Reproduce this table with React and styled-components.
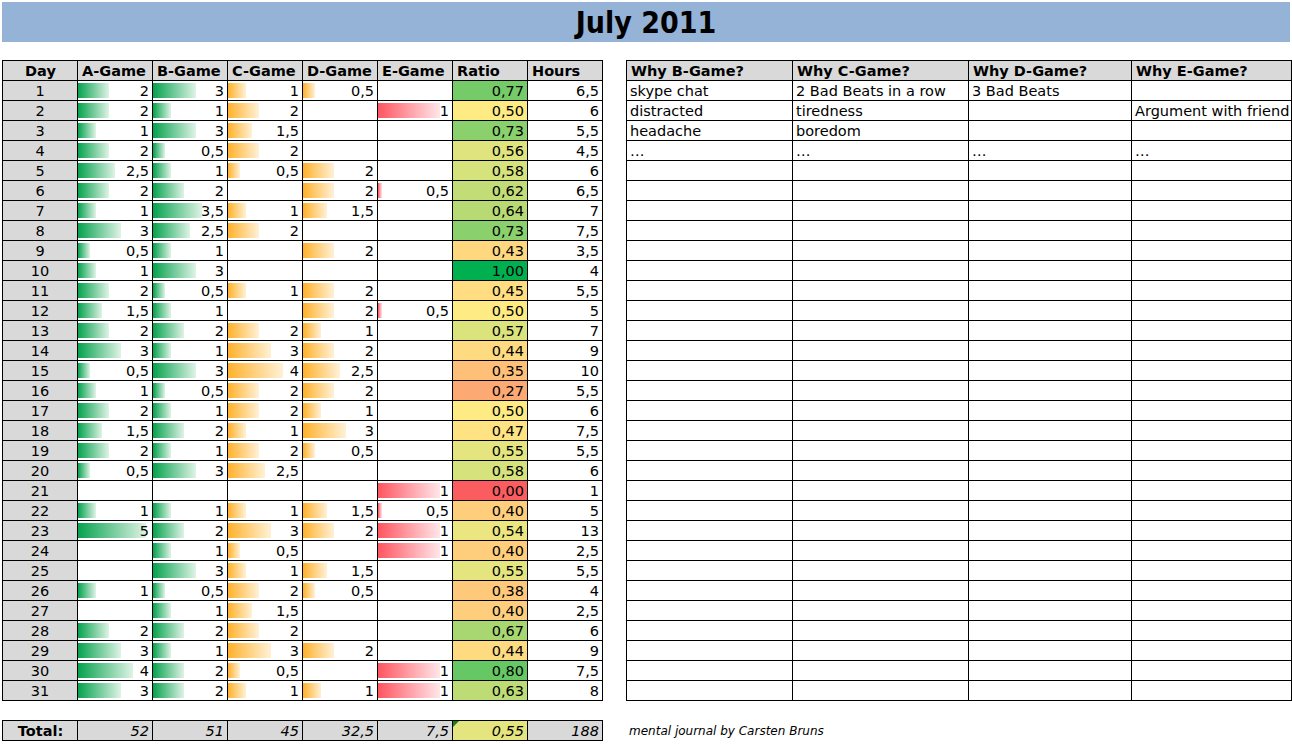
import { Fragment } from "react";
import styled, { createGlobalStyle } from "styled-components";

const GlobalStyle = createGlobalStyle`
    body {
        margin: 0;
        background: #fff;
        font-family: "DejaVu Sans", Verdana, sans-serif;
        color: #000;
    }
`;

const Page = styled.div`
    padding: 2px;
    width: 1288px;
`;

const TitleBar = styled.div`
    height: 40px;
    background: #95b3d7;
    display: flex;
    align-items: center;
    justify-content: center;
    font-family: "DejaVu Sans Condensed", "Liberation Sans Narrow", "DejaVu Sans", sans-serif;
    font-stretch: condensed;
    font-weight: bold;
    font-size: 30px;
    padding-top: 1px;
    box-sizing: border-box;
`;

const Sheets = styled.div`
    display: flex;
    align-items: flex-start;
    gap: 23px;
    margin-top: 18px;
`;

const Grid = styled.div`
    display: grid;
    grid-template-columns: ${(p) => p.$cols};
    grid-auto-rows: 20px;
    border-top: 1px solid #000;
    border-left: 1px solid #000;
    flex-shrink: 0;
    font-size: 14.5px;
`;

const Cell = styled.div`
    position: relative;
    box-sizing: border-box;
    border-right: 1px solid #000;
    border-bottom: 1px solid #000;
    padding: 2px 3px 0 3px;
    line-height: 17px;
    white-space: nowrap;
    overflow: hidden;
    text-align: ${(p) => p.$align || "right"};
    background-color: ${(p) => (p.$gray ? "#d9d9d9" : "#fff")};
    font-style: ${(p) => (p.$italic ? "italic" : "normal")};
`;

const HeadCell = styled(Cell)`
    background-color: #d9d9d9;
    font-weight: bold;
    padding-left: 4px;
    text-align: ${(p) => (p.$center ? "center" : "left")};
`;

const tones = {
    green: "linear-gradient(to right, #05a24d, #dff3e6)",
    orange: "linear-gradient(to right, #ffb12c, #fff1d6)",
    red: "linear-gradient(to right, #ff5560, #ffe6e9)",
};

const BarCell = styled(Cell)`
    background-image: ${(p) => tones[p.$tone]};
    background-repeat: no-repeat;
    background-position: 0 2px;
`;

const Flag = styled.span`
    position: absolute;
    top: 0;
    left: 0;
    width: 0;
    height: 0;
    border-top: 6px solid #1a7f1a;
    border-right: 6px solid transparent;
`;

const Bottom = styled.div`
    display: flex;
    align-items: center;
    gap: 26px;
    margin-top: 19px;
`;

const Credit = styled.div`
    font-style: italic;
    font-size: 12px;
    padding-top: 1px;
`;

// A, B, C, D, E, ratio, hours for each day
const days = [
    [2, 3, 1, 0.5, null, 0.77, 6.5],
    [2, 1, 2, null, 1, 0.5, 6],
    [1, 3, 1.5, null, null, 0.73, 5.5],
    [2, 0.5, 2, null, null, 0.56, 4.5],
    [2.5, 1, 0.5, 2, null, 0.58, 6],
    [2, 2, null, 2, 0.5, 0.62, 6.5],
    [1, 3.5, 1, 1.5, null, 0.64, 7],
    [3, 2.5, 2, null, null, 0.73, 7.5],
    [0.5, 1, null, 2, null, 0.43, 3.5],
    [1, 3, null, null, null, 1, 4],
    [2, 0.5, 1, 2, null, 0.45, 5.5],
    [1.5, 1, null, 2, 0.5, 0.5, 5],
    [2, 2, 2, 1, null, 0.57, 7],
    [3, 1, 3, 2, null, 0.44, 9],
    [0.5, 3, 4, 2.5, null, 0.35, 10],
    [1, 0.5, 2, 2, null, 0.27, 5.5],
    [2, 1, 2, 1, null, 0.5, 6],
    [1.5, 2, 1, 3, null, 0.47, 7.5],
    [2, 1, 2, 0.5, null, 0.55, 5.5],
    [0.5, 3, 2.5, null, null, 0.58, 6],
    [null, null, null, null, 1, 0, 1],
    [1, 1, 1, 1.5, 0.5, 0.4, 5],
    [5, 2, 3, 2, 1, 0.54, 13],
    [null, 1, 0.5, null, 1, 0.4, 2.5],
    [null, 3, 1, 1.5, null, 0.55, 5.5],
    [1, 0.5, 2, 0.5, null, 0.38, 4],
    [null, 1, 1.5, null, null, 0.4, 2.5],
    [2, 2, 2, null, null, 0.67, 6],
    [3, 1, 3, 2, null, 0.44, 9],
    [4, 2, 0.5, null, 1, 0.8, 7.5],
    [3, 2, 1, 1, 1, 0.63, 8],
];

const notes = [
    ["skype chat", "2 Bad Beats in a row", "3 Bad Beats", ""],
    ["distracted", "tiredness", "", "Argument with friend"],
    ["headache", "boredom", "", ""],
    ["…", "…", "…", "…"],
];

const gameTones = ["green", "green", "orange", "orange", "red"];

const fmt = (v) => String(v).replace(".", ",");

function barWidth(col, v) {
    if (col === 4) return Math.round(4 + (v - 0.5) * 116);
    return Math.round(6 + 12.3 * v);
}

function mix(a, b, t) {
    return a.map((c, i) => Math.round(c + (b[i] - c) * t));
}

function ratioColor(r) {
    const red = [250, 92, 96];
    const yellow = [255, 235, 132];
    const green = [0, 176, 80];
    const c = r < 0.5 ? mix(red, yellow, r / 0.5) : mix(yellow, green, (r - 0.5) / 0.5);
    return `rgb(${c.join(",")})`;
}

const mainCols = "repeat(8, 75px)";
const noteCols = "166px 176px 163px 160px";

function App() {
    const totals = [52, 51, 45, 32.5, 7.5];

    return (
        <Page>
            <GlobalStyle />
            <TitleBar>July 2011</TitleBar>
            <Sheets>
                <Grid $cols={mainCols}>
                    <HeadCell $center>Day</HeadCell>
                    {["A-Game", "B-Game", "C-Game", "D-Game", "E-Game", "Ratio", "Hours"].map((h) => (
                        <HeadCell key={h}>{h}</HeadCell>
                    ))}
                    {days.map((row, i) => (
                        <Fragment key={i}>
                            <Cell $gray $align="center">
                                {i + 1}
                            </Cell>
                            {row.slice(0, 5).map((v, c) =>
                                v === null ? (
                                    <Cell key={c} />
                                ) : (
                                    <BarCell
                                        key={c}
                                        $tone={gameTones[c]}
                                        style={{ backgroundSize: `${barWidth(c, v)}px 15px` }}
                                    >
                                        {fmt(v)}
                                    </BarCell>
                                )
                            )}
                            <Cell style={{ backgroundColor: ratioColor(row[5]) }}>
                                {row[5].toFixed(2).replace(".", ",")}
                            </Cell>
                            <Cell>{fmt(row[6])}</Cell>
                        </Fragment>
                    ))}
                </Grid>
                <Grid $cols={noteCols}>
                    {["Why B-Game?", "Why C-Game?", "Why D-Game?", "Why E-Game?"].map((h) => (
                        <HeadCell key={h}>{h}</HeadCell>
                    ))}
                    {days.map((_, i) =>
                        [0, 1, 2, 3].map((c) => (
                            <Cell key={i + "-" + c} $align="left">
                                {notes[i] ? notes[i][c] : ""}
                            </Cell>
                        ))
                    )}
                </Grid>
            </Sheets>
            <Bottom>
                <Grid $cols={mainCols}>
                    <HeadCell $center>Total:</HeadCell>
                    {totals.map((t) => (
                        <Cell key={t} $gray $italic>
                            {fmt(t)}
                        </Cell>
                    ))}
                    <Cell $italic style={{ backgroundColor: ratioColor(0.55) }}>
                        <Flag />
                        0,55
                    </Cell>
                    <Cell $gray $italic>
                        188
                    </Cell>
                </Grid>
                <Credit>mental journal by Carsten Bruns</Credit>
            </Bottom>
        </Page>
    );
}

export default App;
